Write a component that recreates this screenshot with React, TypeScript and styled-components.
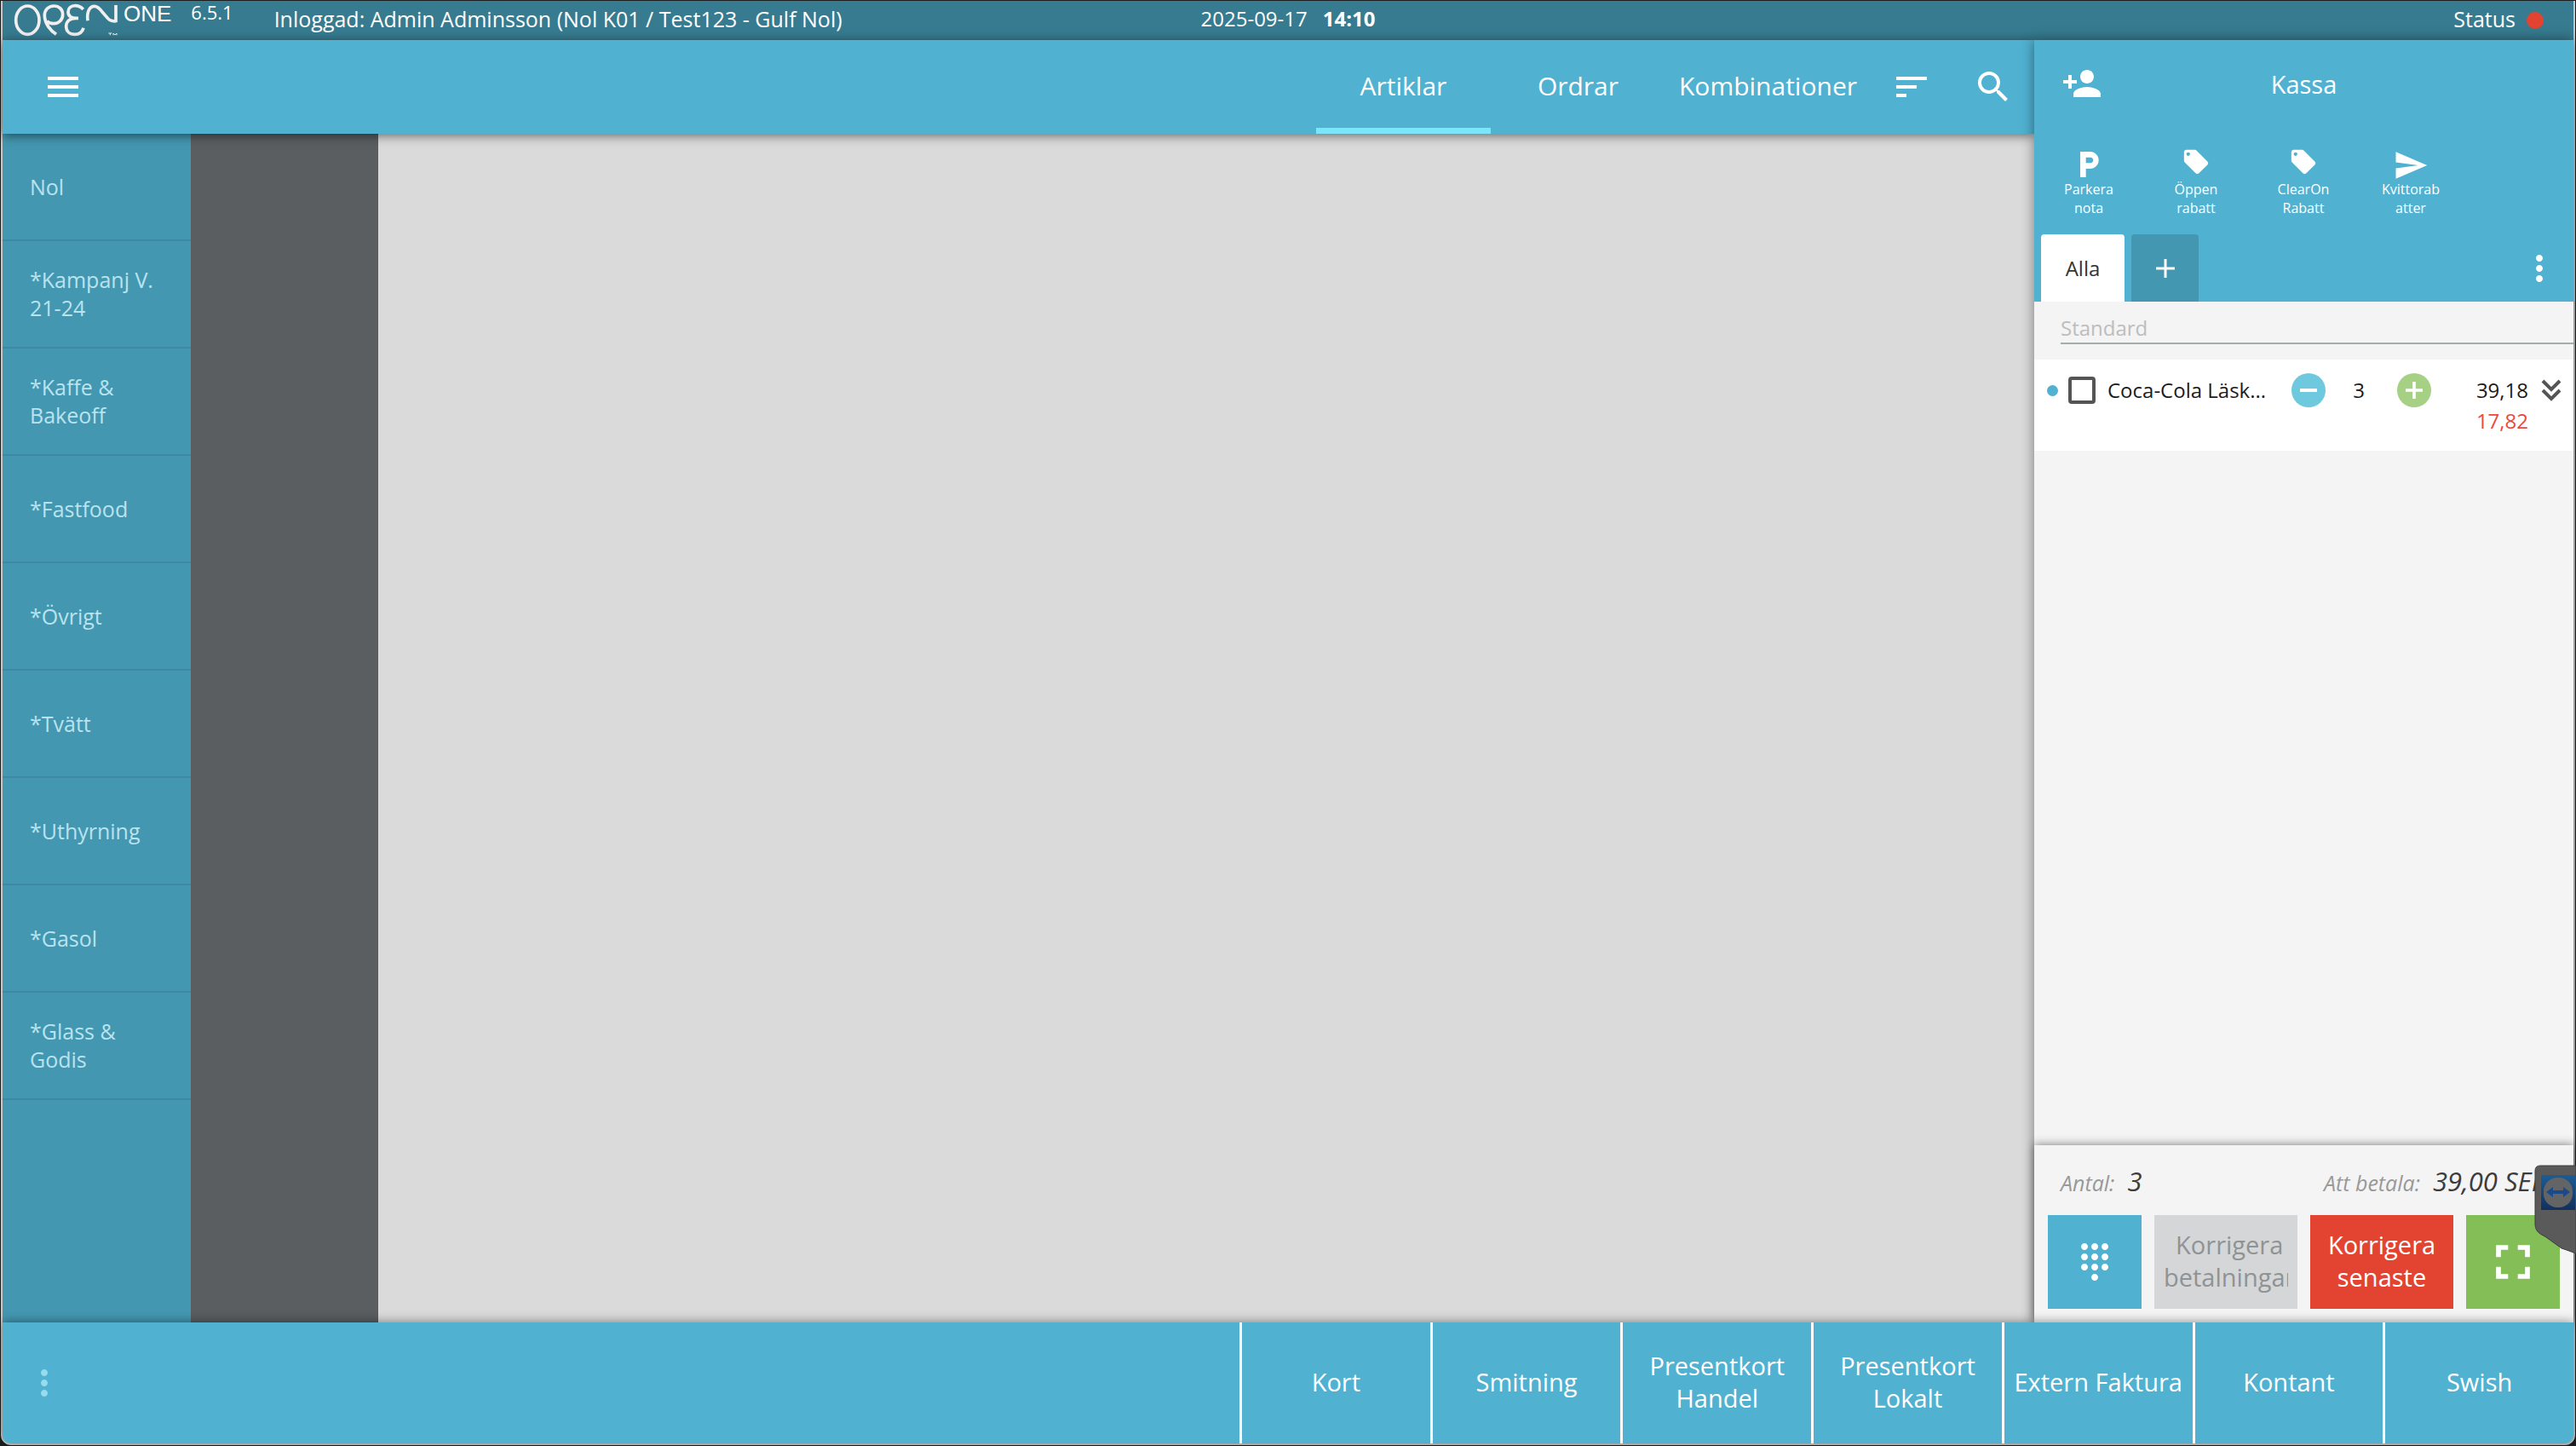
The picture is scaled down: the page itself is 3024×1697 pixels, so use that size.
import React, { useState } from "react";
import styled, { createGlobalStyle } from "styled-components";
import {
  MdDialpad,
  MdFullscreen,
  MdLocalOffer,
  MdLocalParking,
  MdMenu,
  MdMoreVert,
  MdPersonAdd,
  MdSearch,
  MdSend,
  MdSort,
} from "react-icons/md";

const color = {
  topbar: "#367b90",
  primary: "#50b1d1",
  primaryDark: "#4497b1",
  accent: "#7be5fa",
  panel: "#f4f4f4",
  danger: "#e34432",
  success: "#83be56",
};

const GlobalStyle = createGlobalStyle`
  *, *::before, *::after { box-sizing: border-box; }
  body {
    margin: 0;
    background: #000;
    font-family: "Open Sans", "Noto Sans", sans-serif;
  }
  button, input { font: inherit; color: inherit; }
  button { border: 0; padding: 0; background: none; cursor: pointer; }
  svg { display: block; flex-shrink: 0; overflow: visible; }
`;

const Frame = styled.div`
  position: relative;
  height: 100vh;
  padding: 1px;
  background: #1b1e1f;
`;

const WindowEdge = styled.div`
  height: 100%;
  padding: 0 2px 2px;
  background: #c9c8c8;
  border-radius: 0 0 12px 12px;
`;

const AppWindow = styled.div`
  height: 100%;
  display: flex;
  flex-direction: column;
  color: #fff;
`;

const TopBar = styled.header`
  flex: 0 0 46px;
  display: grid;
  grid-template-columns: 1fr auto 1fr;
  background: ${color.topbar};
  font-size: 25px;
  line-height: 42px;
`;

const TopBarStart = styled.div`
  display: flex;
  align-items: flex-start;
  padding-left: 10px;
`;

const ProductName = styled.span`
  margin-left: 2px;
  font-family: "Liberation Sans", Arial, sans-serif;
  font-size: 26px;
  line-height: 30px;
`;

const Version = styled.span`
  margin: 0 48px 0 23px;
  font-size: 22px;
  line-height: 26px;
`;

const Clock = styled.div`
  display: flex;
  gap: 18px;
  font-size: 24px;
`;

const TopBarEnd = styled.div`
  display: flex;
  justify-content: flex-end;
  gap: 13px;
  padding-right: 35px;
`;

const StatusDot = styled.span`
  align-self: center;
  width: 20px;
  height: 20px;
  border-radius: 50%;
  background: ${color.danger};
`;

const Body = styled.div`
  flex: 1;
  min-height: 0;
  display: grid;
  grid-template-columns: minmax(0, 1fr) 633px;
`;

const Catalog = styled.div`
  display: flex;
  flex-direction: column;
  min-height: 0;
`;

const NavBar = styled.nav`
  position: relative;
  z-index: 1;
  flex: 0 0 110px;
  display: flex;
  align-items: stretch;
  background: ${color.primary};
  box-shadow: 0 2px 12px rgba(0, 0, 0, 0.55);
`;

const IconButton = styled.button<{ $width?: number }>`
  display: flex;
  align-items: center;
  justify-content: center;
  width: ${(p) => p.$width ?? 96}px;
  font-size: 48px;
`;

const MenuButton = styled(IconButton)`
  margin: 0 auto 0 23px;
`;

const NavTab = styled.button<{ $active: boolean }>`
  min-width: 205px;
  padding: 4px 16px 0;
  border-bottom: 7px solid ${(p) => (p.$active ? color.accent : "transparent")};
  font-size: 30px;
  white-space: nowrap;
`;

const Workspace = styled.div`
  flex: 1;
  min-height: 0;
  display: grid;
  grid-template-columns: 221px 220px minmax(0, 1fr);
`;

const CategoryList = styled.ul`
  margin: 0;
  padding: 0;
  list-style: none;
  background: ${color.primaryDark};
`;

const CategoryButton = styled.button`
  display: flex;
  align-items: center;
  width: 100%;
  height: 126px;
  padding: 0 32px;
  border-bottom: 2px solid #3e89a1;
  color: #b9e3ee;
  font-size: 25px;
  line-height: 33px;
  text-align: left;
`;

const SubCategories = styled.div`
  background: #5a5e60;
`;

const ArticleArea = styled.main`
  background: #dadada;
`;

const Register = styled.aside`
  position: relative;
  z-index: 2;
  display: flex;
  flex-direction: column;
  min-height: 0;
  background: ${color.panel};
  box-shadow: 0 0 14px rgba(0, 0, 0, 0.45);
  color: #2e2e2e;
`;

const RegisterTop = styled.div`
  background: ${color.primary};
  color: #fff;
`;

const RegisterTitleRow = styled.div`
  display: grid;
  grid-template-columns: 1fr auto 1fr;
  align-items: center;
  height: 102px;
  padding: 0 32px;
`;

const RegisterTitle = styled.h1`
  margin: 0;
  font-size: 29px;
  font-weight: 400;
`;

const QuickActions = styled.div`
  display: flex;
  height: 126px;
  padding: 24px 1px 0;
`;

const QuickAction = styled.button`
  display: flex;
  flex-direction: column;
  align-items: center;
  width: 126px;
  font-size: 16px;
  line-height: 22px;
`;

const QuickIcon = styled.span<{ $size: number }>`
  display: flex;
  align-items: flex-start;
  height: 38px;
  font-size: ${(p) => p.$size}px;
`;

const QuickLabel = styled.span`
  width: 72px;
  overflow-wrap: anywhere;
`;

const TicketTabs = styled.div`
  display: flex;
  gap: 8px;
  height: 79px;
  padding-left: 8px;
`;

const TicketTab = styled.button<{ $active?: boolean }>`
  display: flex;
  align-items: center;
  justify-content: center;
  width: ${(p) => (p.$active ? 98 : 79)}px;
  border-radius: 4px 4px 0 0;
  background: ${(p) => (p.$active ? "#fff" : color.primaryDark)};
  color: ${(p) => (p.$active ? "#333" : "#fff")};
  font-size: 24px;
`;

const TicketMenu = styled(IconButton)`
  margin-left: auto;
  padding-left: 16px;
`;

const FilterRow = styled.div`
  padding: 8px 0 18px 31px;
`;

const FilterInput = styled.input`
  display: block;
  width: 100%;
  height: 42px;
  padding: 5px 0 0;
  border: 0;
  border-bottom: 2px solid #a4aeae;
  border-radius: 0;
  background: none;
  font-size: 24px;
  outline: 0;
  &::placeholder { color: #bdbdbd; opacity: 1; }
`;

const OrderList = styled.ul`
  flex: 1;
  margin: 0;
  padding: 0;
  list-style: none;
`;

const OrderLine = styled.li`
  display: flex;
  height: 107px;
  padding: 18px 15px 0;
  background: #fff;
  color: #1c1c1c;
  font-size: 24px;
  line-height: 36px;
`;

const Cell = styled.div`
  display: flex;
  align-items: center;
  height: 36px;
`;

const LineDot = styled.span`
  width: 13px;
  height: 13px;
  margin-right: 12px;
  border-radius: 50%;
  background: ${color.primary};
`;

const CheckBox = styled.input`
  appearance: none;
  width: 32px;
  height: 32px;
  margin: 0 14px 0 0;
  border: 4px solid #555;
  border-radius: 4px;
  background: #fff;
  &:checked { background: ${color.primary}; }
`;

const ItemName = styled.label`
  flex: 1;
  white-space: nowrap;
`;

const RoundButton = styled.button<{ $color: string }>`
  display: flex;
  align-items: center;
  justify-content: center;
  width: 40px;
  height: 40px;
  border-radius: 50%;
  background: ${(p) => p.$color};
  color: #fff;
`;

const Quantity = styled.span`
  width: 84px;
  padding-right: 6px;
  text-align: center;
`;

const Prices = styled.div`
  width: 114px;
  text-align: right;
`;

const Discount = styled.div`
  color: #ea4a3b;
`;

const ExpandButton = styled.button`
  margin-left: 16px;
  color: #555;
`;

const Summary = styled.section`
  padding: 22px 16px 16px;
  background: ${color.panel};
  box-shadow: 0 -1px 10px rgba(0, 0, 0, 0.45);
`;

const Totals = styled.div`
  display: flex;
  justify-content: space-between;
  height: 60px;
  padding: 0 16px 0 15px;
  font-style: italic;
  line-height: 40px;
  white-space: nowrap;
`;

const TotalLabel = styled.span`
  margin-right: 15px;
  color: #999;
  font-size: 25px;
`;

const TotalValue = styled.span`
  color: #3c3c3c;
  font-size: 31px;
`;

const SummaryButtons = styled.div`
  display: grid;
  grid-template-columns: 110px minmax(0, 1fr) minmax(0, 1fr) 110px;
  gap: 15px;
  height: 110px;
`;

const SummaryButton = styled.button<{ $bg: string; $iconSize?: number }>`
  display: flex;
  align-items: center;
  justify-content: center;
  padding-bottom: ${(p) => (p.$iconSize ? 0 : 2)}px;
  background: ${(p) => p.$bg};
  color: #fff;
  font-size: ${(p) => p.$iconSize ?? 29}px;
  line-height: 38px;
  &:disabled { color: #8f9394; cursor: default; }
`;

const ClippedLabel = styled.span`
  display: flex;
  width: 100%;
  margin: 0 11px;
  overflow: hidden;
`;

const Footer = styled.footer`
  position: relative;
  z-index: 3;
  flex: 0 0 142px;
  display: flex;
  justify-content: space-between;
  overflow: hidden;
  border-radius: 0 0 10px 10px;
  background: ${color.primary};
  box-shadow: 0 -1px 12px rgba(0, 0, 0, 0.4);
`;

const FooterMenu = styled(IconButton)`
  margin-left: 1px;
  color: #97dcec;
`;

const PaymentMethods = styled.div`
  display: grid;
  grid-template-columns: repeat(7, 1fr);
  width: 1566px;
`;

const PaymentButton = styled.button`
  padding-bottom: 3px;
  border-left: 3px solid #fff;
  font-size: 29px;
  line-height: 38px;
  white-space: pre-line;
`;

const RemoteTab = styled.div`
  position: absolute;
  right: 0;
  bottom: 226px;
  z-index: 4;
`;

const BrandMark = () => (
  <svg width="130" height="46" viewBox="33 3 390 138" fill="none" stroke="#f1eff0" strokeWidth="11" role="img" aria-label="Open">
    <ellipse cx="91" cy="71" rx="41" ry="50" />
    <path d="M192 121C172 108 152 84 151 56C150 36 164 21 184 21C203 21 215 34 215 51C215 69 202 83 184 83C174 83 165 80 159 75" />
    <path d="M287 33C280 25 270 20 259 20C244 20 234 29 234 42C234 56 245 64 264 64H270M262 64C240 64 227 75 227 93C227 111 240 121 257 121C272 121 284 113 288 98" />
    <path d="M303 73C299 42 309 22 326 22C339 22 346 31 354 42L374 65C380 72 388 75 402 75M402 18V79" />
    <path strokeWidth="3" d="M376 117H388M382 117V124M393 124V117L399 123L405 117V124" />
  </svg>
);

const PlusMark = ({ size, stroke }: { size: number; stroke: number }) => (
  <svg width={size} height={size} viewBox="0 0 22 22" stroke="currentColor" strokeWidth={stroke} aria-hidden="true">
    <path d="M11 0V22M0 11H22" />
  </svg>
);

const MinusMark = () => (
  <svg width="20" height="20" viewBox="0 0 20 20" stroke="currentColor" strokeWidth="4" aria-hidden="true">
    <path d="M0 10H20" />
  </svg>
);

const DoubleChevron = () => (
  <svg width="22" height="24" viewBox="0 0 22 24" fill="none" stroke="currentColor" strokeWidth="4" aria-hidden="true">
    <path d="M1 1L11 11L21 1M1 12L11 22L21 12" />
  </svg>
);

const RemoteMark = () => (
  <svg width="49" height="104" viewBox="0 0 49 104" aria-hidden="true">
    <defs>
      <linearGradient id="remote" x1="0" y1="0" x2="0" y2="1">
        <stop offset="0" stopColor="#1d5c94" />
        <stop offset="1" stopColor="#12305c" />
      </linearGradient>
    </defs>
    <path d="M49 1H7Q1 1 1 7V70Q1 77 7 81L14 85L32 98L38 100L49 104Z" fill="#5a5a5a" stroke="#3c3c3c" strokeWidth="1" />
    <rect x="8" y="12" width="40" height="41" fill="url(#remote)" />
    <rect x="11" y="15" width="34" height="35" rx="16" fill="#626466" />
    <path d="M14 32L22 26V30H34V26L42 32L34 38V34H22V38Z" fill="#1b4a8a" />
  </svg>
);

const categories = [
  "Nol",
  "*Kampanj V. 21-24",
  "*Kaffe & Bakeoff",
  "*Fastfood",
  "*Övrigt",
  "*Tvätt",
  "*Uthyrning",
  "*Gasol",
  "*Glass & Godis",
];

const tabs = ["Artiklar", "Ordrar", "Kombinationer"];

const quickActions = [
  { label: "Parkera nota", Icon: MdLocalParking, size: 40 },
  { label: "Öppen rabatt", Icon: MdLocalOffer, size: 34 },
  { label: "ClearOn Rabatt", Icon: MdLocalOffer, size: 34 },
  { label: "Kvittorabatter", Icon: MdSend, size: 42 },
];

const payments = ["Kort", "Smitning", "Presentkort\nHandel", "Presentkort\nLokalt", "Extern Faktura", "Kontant", "Swish"];

export default function App() {
  const [tab, setTab] = useState("Artiklar");

  return (
    <>
      <GlobalStyle />
      <Frame>
        <WindowEdge>
          <AppWindow>
            <TopBar>
              <TopBarStart>
                <BrandMark />
                <ProductName>ONE</ProductName>
                <Version>6.5.1</Version>
                <span>Inloggad: Admin Adminsson (Nol K01 / Test123 - Gulf Nol)</span>
              </TopBarStart>
              <Clock>
                <span>2025-09-17</span>
                <strong>14:10</strong>
              </Clock>
              <TopBarEnd>
                <span>Status</span>
                <StatusDot />
              </TopBarEnd>
            </TopBar>

            <Body>
              <Catalog>
                <NavBar>
                  <MenuButton aria-label="Meny">
                    <MdMenu />
                  </MenuButton>
                  {tabs.map((name) => (
                    <NavTab key={name} $active={name === tab} onClick={() => setTab(name)}>
                      {name}
                    </NavTab>
                  ))}
                  <IconButton aria-label="Sortera">
                    <MdSort />
                  </IconButton>
                  <IconButton aria-label="Sök">
                    <MdSearch />
                  </IconButton>
                </NavBar>
                <Workspace>
                  <CategoryList>
                    {categories.map((name) => (
                      <li key={name}>
                        <CategoryButton>{name}</CategoryButton>
                      </li>
                    ))}
                  </CategoryList>
                  <SubCategories />
                  <ArticleArea />
                </Workspace>
              </Catalog>

              <Register>
                <RegisterTop>
                  <RegisterTitleRow>
                    <IconButton $width={48} aria-label="Lägg till kund">
                      <MdPersonAdd />
                    </IconButton>
                    <RegisterTitle>Kassa</RegisterTitle>
                  </RegisterTitleRow>
                  <QuickActions>
                    {quickActions.map(({ label, Icon, size }) => (
                      <QuickAction key={label}>
                        <QuickIcon $size={size}>
                          <Icon />
                        </QuickIcon>
                        <QuickLabel>{label}</QuickLabel>
                      </QuickAction>
                    ))}
                  </QuickActions>
                  <TicketTabs>
                    <TicketTab $active>Alla</TicketTab>
                    <TicketTab aria-label="Ny flik">
                      <PlusMark size={22} stroke={3} />
                    </TicketTab>
                    <TicketMenu aria-label="Fler val">
                      <MdMoreVert />
                    </TicketMenu>
                  </TicketTabs>
                </RegisterTop>

                <FilterRow>
                  <FilterInput placeholder="Standard" aria-label="Standard" />
                </FilterRow>

                <OrderList>
                  <OrderLine>
                    <Cell>
                      <LineDot />
                      <CheckBox type="checkbox" id="line-1" />
                    </Cell>
                    <ItemName htmlFor="line-1">Coca-Cola Läsk...</ItemName>
                    <Cell>
                      <RoundButton $color="#6fc9de" aria-label="Minska">
                        <MinusMark />
                      </RoundButton>
                      <Quantity>3</Quantity>
                      <RoundButton $color="#a6d184" aria-label="Öka">
                        <PlusMark size={20} stroke={4} />
                      </RoundButton>
                    </Cell>
                    <Prices>
                      <div>39,18</div>
                      <Discount>17,82</Discount>
                    </Prices>
                    <Cell>
                      <ExpandButton aria-label="Visa mer">
                        <DoubleChevron />
                      </ExpandButton>
                    </Cell>
                  </OrderLine>
                </OrderList>

                <Summary>
                  <Totals>
                    <div>
                      <TotalLabel>Antal:</TotalLabel>
                      <TotalValue>3</TotalValue>
                    </div>
                    <div>
                      <TotalLabel>Att betala:</TotalLabel>
                      <TotalValue>39,00 SEK</TotalValue>
                    </div>
                  </Totals>
                  <SummaryButtons>
                    <SummaryButton $bg={color.primary} $iconSize={48} aria-label="Knappsats">
                      <MdDialpad />
                    </SummaryButton>
                    <SummaryButton $bg="#d5d6d8" disabled>
                      <ClippedLabel>
                        <span>Korrigera betalningar</span>
                      </ClippedLabel>
                    </SummaryButton>
                    <SummaryButton $bg={color.danger}>Korrigera senaste</SummaryButton>
                    <SummaryButton $bg={color.success} $iconSize={68} aria-label="Helskärm">
                      <MdFullscreen />
                    </SummaryButton>
                  </SummaryButtons>
                </Summary>
              </Register>
            </Body>

            <Footer>
              <FooterMenu aria-label="Fler funktioner">
                <MdMoreVert />
              </FooterMenu>
              <PaymentMethods>
                {payments.map((name) => (
                  <PaymentButton key={name}>{name}</PaymentButton>
                ))}
              </PaymentMethods>
            </Footer>
          </AppWindow>
        </WindowEdge>
        <RemoteTab>
          <RemoteMark />
        </RemoteTab>
      </Frame>
    </>
  );
}
